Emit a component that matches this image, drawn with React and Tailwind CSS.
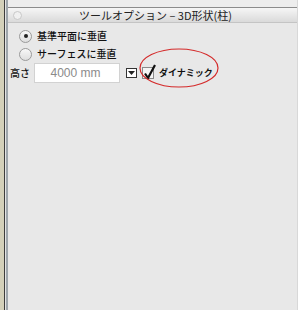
import { useState } from 'react';

const jp = { fontFamily: '"Noto Sans CJK JP", "Liberation Sans", sans-serif' };

function Radio({ checked, label, onClick }) {
  return (
    <div onClick={onClick} className="flex items-center h-[18px] cursor-default">
      <div className="w-[13px] h-[13px] rounded-full border border-[#9a9a9a] bg-gradient-to-b from-[#f8f8f8] to-[#dedede] flex items-center justify-center ml-[11px]">
        {checked && <div className="w-[4px] h-[4px] rounded-full bg-[#222]" />}
      </div>
      <span className="ml-[5px] text-[10px] leading-none font-medium text-[#111]" style={jp}>{label}</span>
    </div>
  );
}

export default function App() {
  const [mode, setMode] = useState(0);
  const [dynamic, setDynamic] = useState(true);

  return (
    <div className="w-[298px] h-[310px] flex bg-[#e8e8e8] overflow-hidden">
      {/* left window edge */}
      <div className="w-[4px] h-full bg-[#d3d0b9] shrink-0" />
      <div className="w-[1px] h-full bg-[#3c3c3c] shrink-0" />
      <div className="w-[1px] h-full bg-[#e4e4e4] shrink-0" />
      <div className="w-[2px] h-full bg-[#9ea6ab] shrink-0" />

      <div className="flex-1 flex flex-col min-w-0 border-r border-[#d8d8d8]">
        {/* top strip */}
        <div className="h-[7px] bg-[#ededed] shrink-0" />
        <div className="h-[1px] bg-[#8c8c8c] shrink-0" />

        {/* title bar */}
        <div className="h-[15px] shrink-0 bg-gradient-to-b from-[#f6f6f6] to-[#dadada] border-b border-[#c4c4c4] flex items-center relative">
          <div className="w-[9px] h-[9px] rounded-full border border-[#c8c8c8] bg-[#f0f0f0] ml-[5px]" />
          <span className="flex-1 text-center text-[11px] leading-none text-[#222] pr-[8px]" style={jp}>
            ツールオプション – 3D形状(柱)
          </span>
        </div>

        {/* options */}
        <div className="flex flex-col pt-[4px] relative">
          <Radio checked={mode === 0} label="基準平面に垂直" onClick={() => setMode(0)} />
          <Radio checked={mode === 1} label="サーフェスに垂直" onClick={() => setMode(1)} />

          <div className="flex items-center h-[21px] -mt-[1px]">
            <span className="ml-[2px] w-[24px] text-[10px] leading-none font-medium text-[#111]" style={jp}>高さ</span>
            <div className="w-[86px] h-[20px] bg-white border border-[#d2d2d2] flex items-center justify-center">
              <span className="text-[12px] leading-none text-[#8a8a8a] pr-[3px]" style={{ fontFamily: '"Liberation Sans", sans-serif' }}>4000 mm</span>
            </div>
            <div className="ml-[6px] w-[11px] h-[10px] border border-[#333] bg-white flex items-center justify-center">
              <svg width="7" height="4" viewBox="0 0 7 4"><path d="M0 0h7L3.5 4z" fill="#222" /></svg>
            </div>
            <div onClick={() => setDynamic(!dynamic)} className="ml-[5px] flex items-center cursor-default">
              <div className="w-[12px] h-[12px] border border-[#8a8a8a] bg-[#f4f4f4] relative">
                {dynamic && (
                  <svg className="absolute -top-[4px] left-[0px]" width="14" height="16" viewBox="0 0 14 16">
                    <path d="M2 9.5l3 4.5L12 1" fill="none" stroke="#111" strokeWidth="2.2" strokeLinejoin="round" />
                  </svg>
                )}
              </div>
              <span className="ml-[5px] text-[9px] leading-none font-bold text-[#111]" style={jp}>ダイナミック</span>
            </div>
          </div>

          {/* red annotation */}
          <svg className="absolute left-[130px] top-[24px] pointer-events-none" width="82" height="42" viewBox="0 0 82 42">
            <ellipse cx="41" cy="21" rx="39" ry="19" fill="none" stroke="#d42a2a" strokeWidth="1.2" />
          </svg>
        </div>
      </div>
    </div>
  );
}
